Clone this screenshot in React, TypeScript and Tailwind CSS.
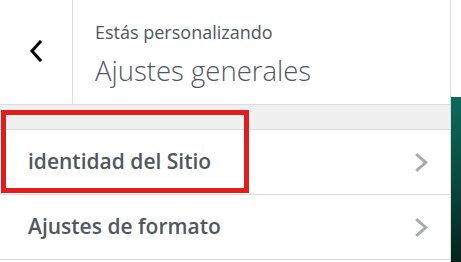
import React from "react";

function Chevron({ className }: { className?: string }) {
  return (
    <svg className={className} viewBox="0 0 14 18" fill="none">
      <path d="M3 2 L11 9 L3 16" stroke="currentColor" strokeWidth="2.8" strokeLinecap="square" />
    </svg>
  );
}

export default function App() {
  return (
    <div className="relative w-[461px] h-[262px] flex bg-white overflow-hidden" style={{ fontFamily: '"Open Sans", "Noto Sans", sans-serif' }}>
      <div className="w-[451px] border-r border-[#dcdcde] flex flex-col">
        <div className="h-[105px] flex border-b border-[#dcdcde]">
          <div className="w-[73px] border-r border-[#dcdcde] flex items-center justify-center">
            <svg width="14" height="22" viewBox="0 0 14 22" fill="none" className="text-black -mt-[2px]">
              <path d="M11 2 L3 11 L11 20" stroke="currentColor" strokeWidth="3" strokeLinecap="square" />
            </svg>
          </div>
          <div className="pl-[22px] pt-[20px]">
            <div className="text-[18px] leading-[24px] text-[#50575e]">Estás personalizando</div>
            <div className="mt-[9px] text-[27.5px] leading-[36px] font-light text-[#50575e]">Ajustes generales</div>
          </div>
        </div>
        <div className="h-[25px] bg-[#f0f0f1] border-b border-[#dcdcde]" />
        <div className="h-[65px] border-b border-[#dcdcde] flex items-center justify-between pl-[28px] pr-[21px]">
          <span className="text-[21px] font-semibold text-[#50575e]">identidad del Sitio</span>
          <Chevron className="w-[15px] h-[19px] text-[#a7aaad]" />
        </div>
        <div className="h-[65px] border-b border-[#dcdcde] flex items-center justify-between pl-[28px] pr-[21px]">
          <span className="text-[21px] font-semibold text-[#50575e]">Ajustes de formato</span>
          <Chevron className="w-[15px] h-[19px] text-[#a7aaad]" />
        </div>
      </div>
      <div className="flex-1 flex flex-col">
        <div className="h-[97px] bg-white" />
        <div className="flex-1 bg-gradient-to-b from-[#0b6a5a] via-[#0a4a3e] to-[#04231c]" />
      </div>
      <div className="absolute left-[1px] top-[110px] w-[248px] h-[83px] border-[5px] border-[#e21b1b]" />
    </div>
  );
}
